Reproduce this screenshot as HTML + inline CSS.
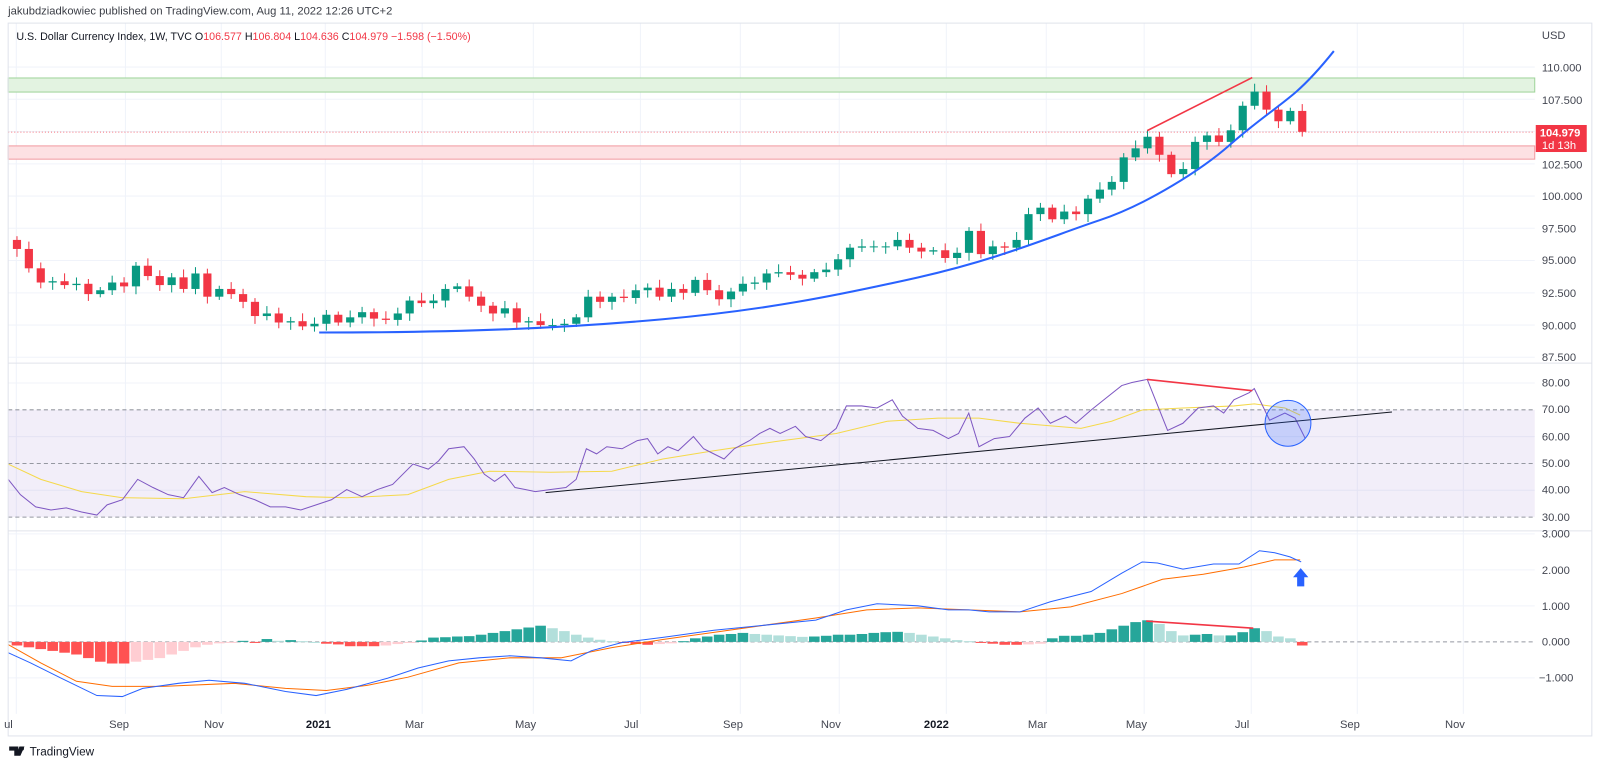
<!DOCTYPE html>
<html><head><meta charset="utf-8">
<style>
html,body{margin:0;padding:0;background:#fff;width:1600px;height:767px;overflow:hidden}
svg{display:block}
text{font-family:"Liberation Sans",sans-serif;fill:#131722}
.ax{font-size:11px;fill:#434651}
</style></head><body>
<svg id="s" width="1600" height="767" viewBox="0 0 1569 752" xmlns="http://www.w3.org/2000/svg">
<rect x="0" y="0" width="1569" height="752" fill="#fff"/>
<text x="8" y="14" style="font-size:11px;fill:#3a3d45">jakubdziadkowiec published on TradingView.com, Aug 11, 2022 12:26 UTC+2</text>
<g id="grid"></g>
<rect x="8" y="76.4" width="1497" height="13.8" fill="#e3f3e1" stroke="#9fd49a" stroke-width="1"/>
<rect x="8" y="143" width="1497" height="13" fill="#fde1e3" stroke="#f29aa1" stroke-width="1"/>
<line x1="8" y1="129.5" x2="1505" y2="129.5" stroke="#f23645" stroke-width="1" stroke-dasharray="1,2" opacity="0.7"/>
<rect x="8" y="401.8" width="1497" height="105.2" fill="#7e57c2" opacity="0.1"/>
<g id="rsiDash"></g>
<g id="candles"></g>
<g id="hist"></g>
<path d="M313,326 C450,326 550,322 650,313 S820,290 900,272 S1030,232 1078,216 S1180,165 1206,142 S1255,104 1271,90 S1300,60 1308,50" fill="none" stroke="#2962ff" stroke-width="2"/>
<line x1="1125" y1="128" x2="1228" y2="76" stroke="#f23645" stroke-width="1.6"/>
<polyline fill="none" stroke="#f5d94a" stroke-width="1" points="8,455 40,470 80,482 120,488 180,489 240,482 300,487 340,488 400,485 440,470 480,462 540,463 600,462 650,450 700,442 760,433 820,425 870,413 920,410 960,410 1000,415 1060,420 1090,413 1120,402 1160,400 1210,398 1230,396 1260,400 1275,407"/>
<polyline fill="none" stroke="#7e57c2" stroke-width="1" points="8,470 20,485 35,497 50,500 65,498 80,502 95,505 105,495 120,490 135,470 150,478 165,485 180,488 195,467 208,483 220,478 235,485 250,490 265,497 280,497 295,500 310,495 325,490 340,480 355,487 370,480 385,475 405,455 420,460 430,452 440,440 455,438 465,450 475,465 485,472 495,465 505,478 515,480 525,482 540,480 555,478 565,470 575,440 585,445 595,438 610,440 625,432 635,430 645,445 655,438 665,442 680,428 690,440 700,445 710,450 720,440 735,432 745,425 755,420 765,425 780,418 790,428 805,432 820,420 830,398 845,398 860,400 875,392 885,408 900,420 915,422 930,430 940,425 950,405 960,438 975,430 990,428 1005,410 1018,400 1030,415 1045,408 1055,415 1070,402 1085,390 1100,378 1110,375 1125,372 1145,422 1160,415 1175,400 1190,398 1200,405 1210,392 1225,385 1230,381 1245,412 1260,405 1270,410 1280,430"/>
<line x1="535" y1="483" x2="1365" y2="404" stroke="#131722" stroke-width="1"/>
<line x1="1125" y1="372" x2="1228" y2="383" stroke="#f23645" stroke-width="1.6"/>
<circle cx="1263" cy="415" r="22.5" fill="#2962ff" fill-opacity="0.22" stroke="#2962ff" stroke-width="1"/>
<polyline fill="none" stroke="#ff6d00" stroke-width="1" points="8,632 40,650 75,668 110,673 160,673 230,670 280,675 320,677 360,672 400,664 450,650 500,645 550,645 600,635 650,627 700,620 750,613 800,606 850,598 900,596 950,598 1000,600 1050,595 1100,582 1140,568 1180,563 1220,556 1250,549 1275,549"/>
<polyline fill="none" stroke="#2962ff" stroke-width="1" points="8,640 30,650 60,665 95,682 120,683 140,675 175,670 205,667 240,670 280,678 310,682 340,676 380,665 410,655 440,648 470,645 500,643 530,645 560,648 580,638 610,630 650,625 700,618 750,613 800,608 830,598 860,592 900,594 930,598 950,598 970,600 1000,600 1030,590 1070,580 1100,562 1120,551 1135,552 1160,558 1190,553 1215,553 1235,540 1250,542 1265,546 1276,551"/>
<line x1="1124" y1="609" x2="1229" y2="616" stroke="#f23645" stroke-width="1.6"/>
<path d="M1275.5,557 L1283,566 L1279,566 L1279,575 L1272,575 L1272,566 L1268,566 Z" fill="#2962ff"/>
<rect x="8" y="22.6" width="1553" height="699" fill="none" stroke="#e0e3eb" stroke-width="1"/>
<line x1="8" y1="356" x2="1561" y2="356" stroke="#e0e3eb"/>
<line x1="8" y1="520.5" x2="1561" y2="520.5" stroke="#e0e3eb"/>
<text x="16" y="39" style="font-size:10.5px"><tspan fill="#131722">U.S. Dollar Currency Index, 1W, TVC  O</tspan><tspan fill="#f23645">106.577</tspan><tspan fill="#131722">  H</tspan><tspan fill="#f23645">106.804</tspan><tspan fill="#131722">  L</tspan><tspan fill="#f23645">104.636</tspan><tspan fill="#131722">  C</tspan><tspan fill="#f23645">104.979  −1.598 (−1.50%)</tspan></text>
<text class="ax" x="1512" y="38">USD</text>
<text class="ax" x="1512" y="70">110.000</text>
<text class="ax" x="1512" y="102">107.500</text>
<text class="ax" x="1512" y="165">102.500</text>
<text class="ax" x="1512" y="196">100.000</text>
<text class="ax" x="1512" y="228">97.500</text>
<text class="ax" x="1512" y="259">95.000</text>
<text class="ax" x="1512" y="291">92.500</text>
<text class="ax" x="1512" y="323">90.000</text>
<text class="ax" x="1512" y="354">87.500</text>
<rect x="1506" y="122.5" width="50" height="26.5" fill="#f23645"/>
<text x="1510" y="134" style="font-size:11px;fill:#fff;font-weight:bold">104.979</text>
<text x="1512" y="146" style="font-size:11px;fill:#fff">1d 13h</text>
<text class="ax" x="1512" y="379">80.00</text>
<text class="ax" x="1512" y="405">70.00</text>
<text class="ax" x="1512" y="432">60.00</text>
<text class="ax" x="1512" y="458">50.00</text>
<text class="ax" x="1512" y="484">40.00</text>
<text class="ax" x="1512" y="511">30.00</text>
<text class="ax" x="1512" y="527">3.000</text>
<text class="ax" x="1512" y="563">2.000</text>
<text class="ax" x="1512" y="598">1.000</text>
<text class="ax" x="1512" y="633">0.000</text>
<text class="ax" x="1509" y="668">−1.000</text>
<g class="ax" style="font-size:11px">
<text class="ax" x="4" y="714">ul</text>
<text class="ax" x="107" y="714">Sep</text>
<text class="ax" x="200" y="714">Nov</text>
<text class="ax" x="300" y="714" style="font-weight:bold;fill:#131722">2021</text>
<text class="ax" x="397" y="714">Mar</text>
<text class="ax" x="505" y="714">May</text>
<text class="ax" x="612" y="714">Jul</text>
<text class="ax" x="709" y="714">Sep</text>
<text class="ax" x="805" y="714">Nov</text>
<text class="ax" x="906" y="714" style="font-weight:bold;fill:#131722">2022</text>
<text class="ax" x="1008" y="714">Mar</text>
<text class="ax" x="1104" y="714">May</text>
<text class="ax" x="1211" y="714">Jul</text>
<text class="ax" x="1314" y="714">Sep</text>
<text class="ax" x="1417" y="714">Nov</text>
</g>
<path d="M9,732 h9 v9 h-4 v-5 h-5z M19,732 h5 l-4,9 h-4z" fill="#131722"/>
<circle cx="21.5" cy="734" r="2" fill="#131722"/>
<text x="29" y="741" style="font-size:11.5px;fill:#131722">TradingView</text>
</svg>
<script>
const NS="http://www.w3.org/2000/svg";
function el(p,t,a){const e=document.createElementNS(NS,t);for(const k in a)e.setAttribute(k,a[k]);p.appendChild(e);return e;}
const g=document.getElementById('grid');
const vx=[8,115,209,311,406,515,620,718,815,920,1018,1114,1219,1323,1427];
vx.forEach(x=>{el(g,'line',{x1:x+8,y1:23,x2:x+8,y2:700,stroke:'#f0f3fa'});});
[65.7,97.3,128.9,160.6,192.2,223.8,255.4,287.1,318.7,350.3].forEach(y=>el(g,'line',{x1:8,y1:y,x2:1505,y2:y,stroke:'#f0f3fa'}));
[375.5,428.1,480.7].forEach(y=>el(g,'line',{x1:8,y1:y,x2:1505,y2:y,stroke:'#f0f3fa'}));
[523.5,558.8,594.1,664.7].forEach(y=>el(g,'line',{x1:8,y1:y,x2:1505,y2:y,stroke:'#f0f3fa'}));
const rd=document.getElementById('rsiDash');
[401.8,454.4,507].forEach(y=>el(rd,'line',{x1:8,y1:y,x2:1505,y2:y,stroke:'#9598a1','stroke-dasharray':'4,3'}));
el(rd,'line',{x1:8,y1:629.4,x2:1505,y2:629.4,stroke:'#9598a1','stroke-dasharray':'4,3'});
const C=[97.4,97.2,96.6,95.9,94.4,93.3,93.4,93.1,93.2,92.4,92.7,93.3,93.0,94.6,93.8,93.1,93.7,92.8,94.0,92.2,92.8,92.4,91.8,90.7,90.9,90.2,90.3,89.9,90.1,90.8,90.2,90.6,91.0,90.5,90.4,90.9,91.9,91.7,91.9,92.8,93.0,92.2,91.5,90.9,91.3,90.2,90.3,90.0,90.0,90.1,90.6,92.2,91.8,92.2,92.1,92.7,92.9,92.2,92.8,92.5,93.5,92.7,92.0,92.6,93.2,93.3,94.0,94.1,93.9,93.6,94.1,94.3,95.1,96.0,96.1,96.1,96.1,96.6,96.0,95.7,95.8,95.2,95.6,97.3,95.5,96.1,96.0,96.6,98.6,99.1,98.2,98.8,98.6,99.8,100.5,101.1,103.0,103.7,104.6,103.2,101.7,102.1,104.2,104.7,104.2,105.1,107.0,108.1,106.7,105.8,106.6,104.98];
const n=C.length, sp=11.67, last=1277;
const py=p=>65.7+(110-p)*12.65;
const cg=document.getElementById('candles');
for(let i=1;i<n;i++){const x=last-(n-1-i)*sp;if(x<6)continue;const o=C[i-1],c=C[i];
 const up=c>=o,col=up?'#089981':'#f23645';
 const h=Math.max(o,c)+0.25+((i*37)%10)/25,l=Math.min(o,c)-0.25-((i*53)%10)/25;
 el(cg,'line',{x1:x,y1:py(h),x2:x,y2:py(l),stroke:col,'stroke-width':1});
 const y1=py(Math.max(o,c)),y2=py(Math.min(o,c));
 el(cg,'rect',{x:x-4,y:y1,width:8,height:Math.max(1,y2-y1),fill:col});}
const H=[-0.1,-0.15,-0.2,-0.25,-0.3,-0.35,-0.45,-0.55,-0.6,-0.6,-0.55,-0.5,-0.45,-0.35,-0.25,-0.15,-0.08,-0.04,-0.02,0.03,-0.01,0.08,0.03,0.05,0.02,0.0,-0.05,-0.07,-0.12,-0.12,-0.12,-0.1,-0.06,-0.03,0.04,0.12,0.13,0.15,0.16,0.2,0.25,0.3,0.35,0.4,0.45,0.38,0.3,0.2,0.12,0.06,0.02,-0.03,-0.06,-0.08,-0.06,-0.04,0.02,0.1,0.15,0.2,0.22,0.25,0.22,0.2,0.18,0.16,0.14,0.15,0.17,0.2,0.2,0.22,0.25,0.27,0.28,0.25,0.2,0.15,0.1,0.05,0.02,-0.02,-0.05,-0.08,-0.08,-0.07,-0.05,0.1,0.17,0.17,0.2,0.25,0.35,0.45,0.55,0.6,0.5,0.3,0.18,0.2,0.22,0.18,0.18,0.27,0.38,0.3,0.15,0.1,-0.1];
const hg=document.getElementById('hist');const m=H.length;const z=629.4,u=35.3;
for(let i=0;i<m;i++){const x=last-(m-1-i)*sp;if(x<4)continue;const v=H[i],pv=i?H[i-1]:0;let col;
 if(v>=0)col=v>=pv?'#26a69a':'#b2dfdb';else col=v<=pv?'#ff5252':'#ffcdd2';
 const y=v>=0?z-v*u:z;el(hg,'rect',{x:x-5.2,y:y,width:10.4,height:Math.max(1,Math.abs(v)*u),fill:col});}
</script>
</body></html>
